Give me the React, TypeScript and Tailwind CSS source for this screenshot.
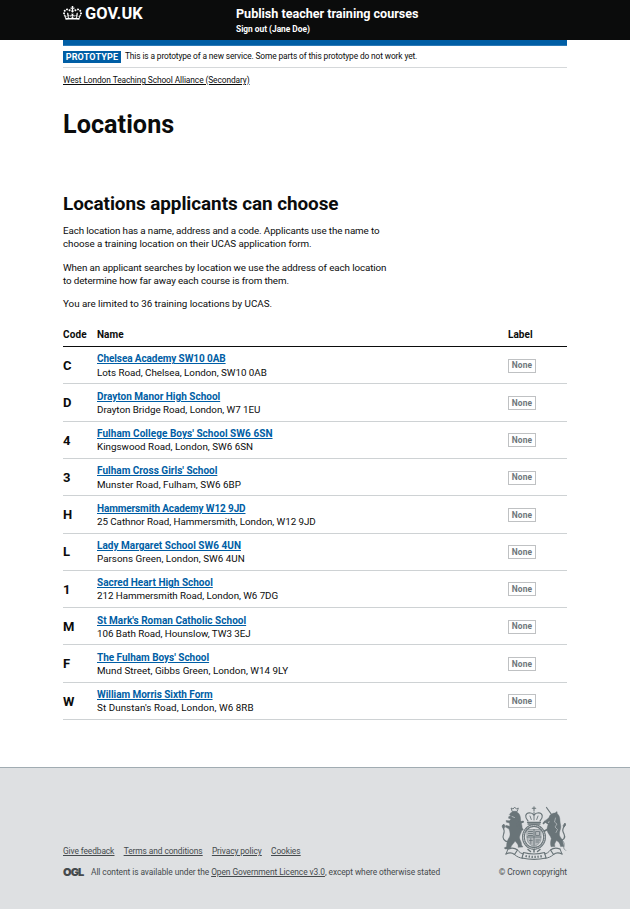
type Place = { code: string; name: string; address: string; nameTrack: string; addressTrack: string };

const places: Place[] = [
  { code: "C", name: "Chelsea Academy SW10 0AB", address: "Lots Road, Chelsea, London, SW10 0AB", nameTrack: "tracking-[-0.09px]", addressTrack: "tracking-[-0.03px]" },
  { code: "D", name: "Drayton Manor High School", address: "Drayton Bridge Road, London, W7 1EU", nameTrack: "tracking-[0px]", addressTrack: "tracking-[-0.03px]" },
  { code: "4", name: "Fulham College Boys' School SW6 6SN", address: "Kingswood Road, London, SW6 6SN", nameTrack: "tracking-[0.046px]", addressTrack: "tracking-[0.01px]" },
  { code: "3", name: "Fulham Cross Girls' School", address: "Munster Road, Fulham, SW6 6BP", nameTrack: "tracking-[0.01px]", addressTrack: "tracking-[0.05px]" },
  { code: "H", name: "Hammersmith Academy W12 9JD", address: "25 Cathnor Road, Hammersmith, London, W12 9JD", nameTrack: "tracking-[-0.12px]", addressTrack: "tracking-[-0.05px]" },
  { code: "L", name: "Lady Margaret School SW6 4UN", address: "Parsons Green, London, SW6 4UN", nameTrack: "tracking-[0.02px]", addressTrack: "tracking-[0.03px]" },
  { code: "1", name: "Sacred Heart High School", address: "212 Hammersmith Road, London, W6 7DG", nameTrack: "tracking-[0px]", addressTrack: "tracking-[-0.06px]" },
  { code: "M", name: "St Mark's Roman Catholic School", address: "106 Bath Road, Hounslow, TW3 3EJ", nameTrack: "tracking-[0.02px]", addressTrack: "tracking-[-0.03px]" },
  { code: "F", name: "The Fulham Boys' School", address: "Mund Street, Gibbs Green, London, W14 9LY", nameTrack: "tracking-[-0.02px]", addressTrack: "tracking-[0.03px]" },
  { code: "W", name: "William Morris Sixth Form", address: "St Dunstan's Road, London, W6 8RB", nameTrack: "tracking-[-0.04px]", addressTrack: "tracking-[0.07px]" },
];

function Crown() {
  return (
    <svg viewBox="0 0 132 97" className="h-[14px] w-[19px] fill-white">
      <path
        fillRule="evenodd"
        d="M25 30.2c3.5 1.5 7.7-.2 9.1-3.7 1.5-3.6-.2-7.8-3.9-9.2-3.6-1.4-7.6.3-9.1 3.9-1.4 3.5.3 7.5 3.9 9zM9 39.5c3.6 1.5 7.8-.2 9.2-3.7 1.5-3.6-.2-7.8-3.9-9.1-3.6-1.5-7.6.2-9.1 3.8-1.4 3.5.3 7.5 3.8 9zM4.4 57.2c3.5 1.5 7.7-.2 9.1-3.8 1.5-3.6-.2-7.7-3.9-9.1-3.5-1.5-7.6.3-9.1 3.8-1.4 3.5.3 7.6 3.9 9.1zm38.3-21.4c3.5 1.5 7.7-.2 9.1-3.8 1.5-3.6-.2-7.7-3.9-9.1-3.6-1.5-7.6.3-9.1 3.8-1.3 3.6.4 7.7 3.9 9.1zm64.4-5.6c-3.6 1.5-7.8-.2-9.1-3.7-1.5-3.6.2-7.8 3.8-9.2 3.6-1.4 7.7.3 9.2 3.9 1.3 3.5-.4 7.5-3.9 9zm15.9 9.3c-3.6 1.5-7.7-.2-9.1-3.7-1.5-3.6.2-7.8 3.7-9.1 3.6-1.5 7.7.2 9.2 3.8 1.5 3.5-.3 7.5-3.8 9zm4.7 17.7c-3.6 1.5-7.8-.2-9.2-3.8-1.5-3.6.2-7.7 3.9-9.1 3.6-1.5 7.7.3 9.2 3.8 1.3 3.5-.4 7.6-3.9 9.1zM89.3 35.8c-3.6 1.5-7.8-.2-9.2-3.8-1.4-3.6.2-7.7 3.9-9.1 3.6-1.5 7.7.3 9.2 3.8 1.4 3.6-.3 7.7-3.9 9.1zM69.7 17.7l8.9 4.7V9.3l-8.9 2.8c-.2-.3-.5-.6-.9-.9L72.4 0H59.6l3.5 11.2c-.3.3-.6.5-.9.9l-8.8-2.8v13.1l8.8-4.7c.3.3.6.7.9.9l-5 15.4v.1c-.2.8-.4 1.6-.4 2.4 0 4.1 3.1 7.5 7 8.1h.2c.3 0 .7.1 1 .1.4 0 .7 0 1-.1h.2c4-.6 7.1-4.1 7.1-8.1 0-.8-.1-1.7-.4-2.4V34l-5.1-15.4c.4-.2.7-.6 1-.9zM66 92.8c16.9 0 32.8 1.1 47.1 3.2 4-16.9 8.9-26.7 14-33.5l-9.6-3.4c1 4.9 1.1 7.2 0 10.2-1.5-1.4-3-4.3-4.2-8.7L108.6 76c2.8-2 5-3.2 7.5-3.3-4.4 9.4-10 11.9-13.6 11.2-4.3-.8-6.3-4.6-5.6-7.9 1-4.7 5.7-5.9 8-.5 4.3-8.7-3-11.4-7.6-8.8 7.1-7.2 7.9-13.5 2.1-21.1-8 6.1-8.1 12.3-4.5 20.8-4.7-5.4-12.1-2.5-9.5 6.2 3.4-5.2 7.9-2 7.2 3.1-.6 4.3-6.4 7.8-13.5 7.2-10.3-.9-10.9-8-11.2-13.8 2.5-.5 7.1 1.8 11 7.3L80.2 60c-4.1 4.4-8 5.3-12.3 5.4 1.4-4.4 8-11.6 8-11.6H55.5s6.4 7.2 7.9 11.6c-4.2-.1-8-1-12.3-5.4l1.4 16.4c3.9-5.5 8.5-7.7 10.9-7.3-.3 5.8-.9 12.8-11.1 13.8-7.2.6-12.9-2.9-13.5-7.2-.7-5 3.8-8.3 7.1-3.1 2.7-8.7-4.6-11.6-9.4-6.2 3.7-8.5 3.6-14.7-4.6-20.8-5.8 7.6-5 13.9 2.2 21.1-4.7-2.6-11.9.1-7.7 8.8 2.3-5.5 7.1-4.2 8.1.5.7 3.3-1.3 7.1-5.7 7.9-3.5.7-9-1.8-13.5-11.2 2.5.1 4.7 1.3 7.5 3.3l-4.7-15.4c-1.2 4.4-2.7 7.2-4.3 8.7-1.1-3-.9-5.3 0-10.2l-9.5 3.4c5 6.9 9.9 16.7 14 33.5 14.8-2.1 30.8-3.2 47.7-3.2z"
      />
    </svg>
  );
}

/* Royal coat of arms: crown and quartered shield between the lion and the unicorn. */
function Crest() {
  return (
    <svg viewBox="0 0 66 54" className="h-[54px] w-[66px]" fill="#697478" stroke="#697478" strokeLinecap="round" strokeLinejoin="round">
      {/* crown */}
      <g fill="none" strokeWidth="1.1">
        <path d="M33 .8v4M31.300 2.300h3.400" />
        <path d="M27 15c-3.500-3.500-3-8 1.500-8.300 2.200 0 3.600 1 4.500 2.400.9-1.400 2.300-2.400 4.500-2.400 4.500.3 5 4.800 1.500 8.300" />
        <path d="M33 6v8M29 10l1.300 3.500M37 10l-1.300 3.500" strokeWidth=".9" />
        <path d="M26.500 16.300h13M27 18h12" strokeWidth="1.300" />
      </g>
      {/* garter and shield */}
      <ellipse cx="33" cy="31" rx="10.600" ry="11.500" fill="none" strokeWidth="2.800" />
      <ellipse cx="33" cy="31" rx="10.600" ry="11.500" fill="none" stroke="#dee0e2" strokeWidth=".8" strokeDasharray="1 1.200" />
      <path d="M26 23.500h14v9c0 4-3 6.500-7 8-4-1.500-7-4-7-8z" strokeWidth=".5" fillOpacity=".35" />
      <path d="M33 23.500v16M26 31h14" fill="none" strokeWidth=".9" />
      <path d="M27.500 25.500h4M27.500 27.500h4M27.500 29.500h4M35 34h3.500M35 36h2.500" strokeWidth=".9" />
      <path d="M35 25.500h3.500v4H35zM29.800 32.500v5M28.500 34.500h2.800" fill="none" strokeWidth=".8" />
      {/* lion */}
      <path d="M11 5l-.9-3 2 1 1.600-1.900 1.600 1.900 2-1-.9 3z" fill="none" strokeWidth=".9" />
      <path d="M9.500 7c1.500-1.700 6-2 8 .2 1.600 1.600 2 4 2.200 6.800.3 3 1.500 5 1.500 8 0 3.500-2.200 6-2.700 9-.2 3 2.500 5 2 8l1.500 2-5 .3c1-2.500-1.500-4.300-3-6.300-1 2.500-4 4-4.500 8H4l-.7-1.200 2.200-1C5.500 36 7 33 8.500 31c1-2.500.5-5-.5-8L4.500 21l.3-1.700 4 1L8.500 17l-3-.7-.5-1.800 3.500.2L10 13l-2.500-.8.300-1.700 2-.5-1.300-1.200z" strokeWidth=".4" />
      <path d="M16.500 20l5 3.500M16.500 17.500l5.500-1.800" strokeWidth="2" />
      <path d="M7.500 36C3 35.500 1 32 2.500 28.500 3.500 26 4 24.500 2 21.500" fill="none" strokeWidth="1.100" />
      <path d="M2.500 22.500l-1.500-2.500 1.800-2 1.200 2.500z" strokeWidth=".8" />
      <path d="M11 10.500l2.500 1" fill="none" stroke="#dee0e2" strokeWidth=".6" />
      {/* unicorn */}
      <path d="M45.500 1.500l5 7" fill="none" strokeWidth="1.200" />
      <path d="M48 11.500c.5-3 3.500-4.500 6-4.500l2-1.500.3 2.300c2 1.500 2.700 4.200 2.700 7.200s1.500 5 .5 8c-.8 2.500-1.500 4.500-.8 7 1.500 2.500 3.300 4 3.300 7l1 3.500h-3.500c-.3-3-2-5-4-6-1 2-2.500 3-1.500 6l-4 .2c-1-3.500-.3-6 .3-8-.5-3-4-5.500-4.300-9 0-3.500 1.500-6 3-9l-2.800 1.700-2-1.500z" strokeWidth=".4" />
      <path d="M49.500 19l-5.500-3.500-1.500 1.800M49 22l-5.500 3" fill="none" strokeWidth="1.800" />
      <path d="M58.500 35c4-1 6.500-3 4.500-7-1.500-3-2-4.500.3-8" fill="none" strokeWidth="1.200" />
      <path d="M63 21l1.700-2-.7-2-1.700 2.500z" strokeWidth=".8" />
      <path d="M54.500 12l-1 4 2.500 2-2 3 2.500 2.500-1.500 3" fill="none" stroke="#dee0e2" strokeWidth=".5" />
      <path d="M58 32c3 2 6 4 5 8s1.500 3 2 5" fill="none" strokeWidth=".7" strokeDasharray="1.200 .8" />
      {/* motto ribbon */}
      <path d="M7 43c4-1.500 7-1 9.500 1l-3 4.500c-2.500-2-5.500-2-8.500-.500M59 43c-4-1.500-7-1-9.500 1l3 4.500c2.500-2 5.500-2 8.500-.500" fill="none" strokeWidth="1.200" />
      <path d="M7 43l-2 5M59 43l2 5" fill="none" strokeWidth="1" />
      <path d="M16.500 44c2 2.500 3.500 3.500 6 4M13.500 48.500c2.500 2.300 5 3.500 8.500 3.800M49.500 44c-2 2.500-3.500 3.500-6 4M52.500 48.500c-2.500 2.300-5 3.500-8.500 3.800" fill="none" strokeWidth="1" />
      <path d="M22.500 46.500c7 2 14 2 21 0l1.500 5.500c-8 1.800-16 1.800-24 0z" fill="none" strokeWidth="1.100" />
      <path d="M24.500 50c6 1.200 11 1.200 17 0" fill="none" strokeWidth="2.200" strokeDasharray="1.400 1.600" strokeLinecap="butt" />
      <path d="M27 43.500l2.500 2M39 43.500l-2.500 2M33 43.500v2.500" strokeWidth="1.500" />
    </svg>
  );
}

export default function App() {
  return (
    <div className="flex h-[909px] w-[630px] flex-col overflow-hidden bg-white font-['Roboto','Liberation_Sans',sans-serif] text-[#0b0c0c]">
      <header className="flex h-10 shrink-0 bg-[#0b0c0c] pl-[63px] text-white">
        <div className="flex w-[173px] gap-[3px] pt-[6px]">
          <Crown />
          <span className="text-[16.4px] leading-4 font-bold tracking-[0.1px]">GOV.UK</span>
        </div>
        <div className="pt-[6px]">
          <div className="text-[12.6px] leading-4 font-bold tracking-[-0.02px]">Publish teacher training courses</div>
          <div className="mt-px text-[8.4px] leading-[12px] font-bold tracking-[-0.02px]">Sign out (Jane Doe)</div>
        </div>
      </header>

      <main className="mx-[63px] flex h-[727px] shrink-0 flex-col">
        <div className="h-[5px] shrink-0 border-b border-[#2b79b6] bg-[#005ea5] box-content" />
        <div className="flex h-[22px] shrink-0 items-center border-b border-[#d5d8da]">
          <strong className="mr-1 flex h-[12px] w-[58px] items-center justify-center bg-[#005ea5] text-[9px] leading-[12px] font-bold tracking-[0.2px] text-white">PROTOTYPE</strong>
          <span className="text-[8.400px] leading-[11px] tracking-[-0.13px]">This is a prototype of a new service. Some parts of this prototype do not work yet.</span>
        </div>
        <a className="mt-[6px] text-[8.4px] leading-[12px] tracking-[-0.1px] underline underline-offset-1">West London Teaching School Alliance (Secondary)</a>

        <h1 className="mt-[24px] text-[25.2px] leading-[30px] font-bold tracking-[0.04px]">Locations</h1>
        <h2 className="mt-[52px] text-[18.9px] leading-[24px] font-bold tracking-[-0.064px]">Locations applicants can choose</h2>

        <div className="mt-[8px] text-[9.8px] leading-[13.200px]">
          <p>
            <span className="tracking-[-0.12px]">Each location has a name, address and a code. Applicants use the name to</span>
            <br />
            <span className="tracking-[-0.05px]">choose a training location on their UCAS application form.</span>
          </p>
          <p className="mt-[10.500px] tracking-[-0.11px]">
            When an applicant searches by location we use the address of each location
            <br />
            to determine how far away each course is from them.
          </p>
          <p className="mt-[10px] tracking-[-0.01px]">You are limited to 36 training locations by UCAS.</p>
        </div>

        <div className="mt-[17.500px] flex h-[19px] shrink-0 border-b border-[#0b0c0c] text-[10px] leading-[13px] font-bold">
          <span className="w-[34px] tracking-[0.150px]">Code</span>
          <span className="w-[411px] tracking-[0.020px]">Name</span>
          <span className="tracking-[0.050px]">Label</span>
        </div>
        {places.map((p) => (
          <div key={p.code} className="flex h-[37.300px] shrink-0 items-center border-b border-[#ced2d4] pt-px">
            <span className="w-[34px] text-[13px] font-bold">{p.code}</span>
            <div className="w-[411px] text-[10px] leading-[13.200px]">
              <div className={p.nameTrack}>
                <a className="font-bold text-[#005ea5] underline underline-offset-1">{p.name}</a>
              </div>
              <div className={`text-[9.8px] ${p.addressTrack}`}>{p.address}</div>
            </div>
            <span className="flex h-[14px] w-[28px] items-center justify-center border border-[#bfc1c3] text-[8.4px] font-bold tracking-[0.150px] text-[#6f777b]">None</span>
          </div>
        ))}
      </main>

      <footer className="flex grow items-start justify-between border-t border-[#a1acb2] bg-[#dee0e2] px-[63px] text-[8.4px] leading-[12px] text-[#454a4d]">
        <div className="pt-[77px]">
          <div className="flex gap-[9.500px] tracking-[-0.100px] underline underline-offset-1">
            <a>Give feedback</a>
            <a>Terms and conditions</a>
            <a>Privacy policy</a>
            <a>Cookies</a>
          </div>
          <div className="mt-[8px] flex items-center">
            <span className="w-7 font-['Inter'] text-[11px] leading-[12px] font-black tracking-[-0.900px]">OGL</span>
            <span className="pt-px tracking-[-0.070px]">
              All content is available under the <a className="underline underline-offset-1">Open Government Licence v3.0</a>, except where otherwise stated
            </span>
          </div>
        </div>
        <div className="flex flex-col items-end pt-[38px]">
          <Crest />
          <span className="mt-[6px] tracking-[-0.060px]">© Crown copyright</span>
        </div>
      </footer>
    </div>
  );
}
